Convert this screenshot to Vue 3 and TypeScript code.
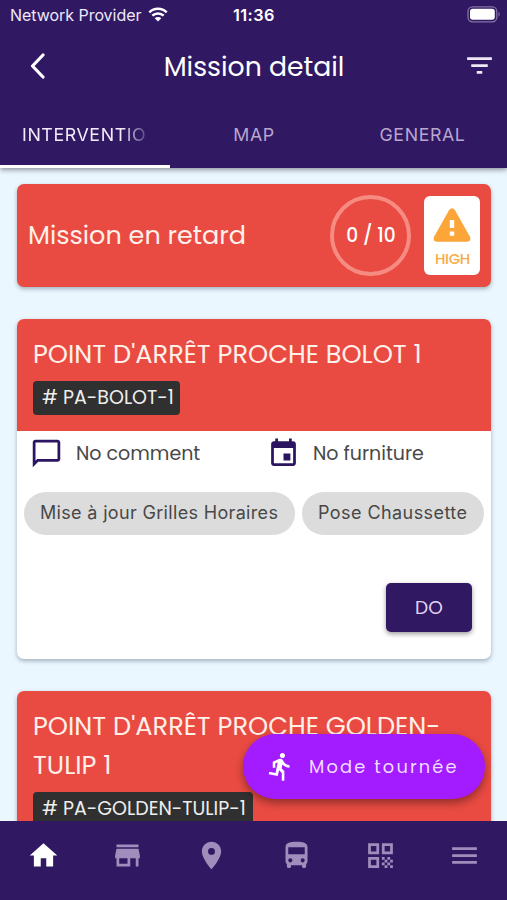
<script setup lang="ts">
interface NavItem {
  name: string
  path: string
  active?: boolean
}

interface Stop {
  lines: string[]
  code: string
}

const tabs: string[] = ['INTERVENTIO', 'MAP', 'GENERAL']

const firstStop: Stop = { lines: ["POINT D'ARRÊT PROCHE BOLOT 1"], code: 'PA-BOLOT-1' }
const secondStop: Stop = {
  lines: ["POINT D'ARRÊT PROCHE GOLDEN-", 'TULIP 1'],
  code: 'PA-GOLDEN-TULIP-1',
}

const navItems: NavItem[] = [
  { name: 'home', active: true, path: 'M10 20v-6h4v6h5v-8h3L12 3 2 12h3v8z' },
  { name: 'store', path: 'M20 4H4v2h16V4zm1 10v-2l-1-5H4l-1 5v2h1v6h10v-6h4v6h2v-6h1zm-9 4H6v-4h6v4z' },
  {
    name: 'place',
    path: 'M12 2C8.13 2 5 5.13 5 9c0 5.25 7 13 7 13s7-7.75 7-13c0-3.87-3.13-7-7-7zm0 9.5a2.5 2.5 0 0 1 0-5 2.5 2.5 0 0 1 0 5z',
  },
  {
    name: 'bus',
    path: 'M4 16c0 .88.39 1.67 1 2.22V20c0 .55.45 1 1 1h1c.55 0 1-.45 1-1v-1h8v1c0 .55.45 1 1 1h1c.55 0 1-.45 1-1v-1.78c.61-.55 1-1.34 1-2.22V6c0-3.5-3.58-4-8-4s-8 .5-8 4v10zm3.5 1c-.83 0-1.5-.67-1.5-1.5S6.67 14 7.5 14s1.5.67 1.5 1.5S8.33 17 7.5 17zm9 0c-.83 0-1.5-.67-1.5-1.5s.67-1.5 1.5-1.5 1.5.67 1.5 1.5-.67 1.5-1.5 1.5zm1.5-6H6V6h12v5z',
  },
  {
    name: 'qr',
    path: 'M3 11h8V3H3v8zm2-6h4v4H5V5zM3 21h8v-8H3v8zm2-6h4v4H5v-4zM13 3v8h8V3h-8zm6 6h-4V5h4v4zM19 19h2v2h-2zM13 13h2v2h-2zM15 15h2v2h-2zM13 17h2v2h-2zM15 19h2v2h-2zM17 17h2v2h-2zM17 13h2v2h-2zM19 15h2v2h-2z',
  },
  { name: 'menu', path: 'M3 18h18v-2H3v2zm0-5h18v-2H3v2zm0-7v2h18V6H3z' },
]
</script>

<template>
  <div class="screen">
    <header class="header">
      <div class="status">
        <div class="carrier">
          <span>Network Provider</span>
          <svg class="wifi" viewBox="0 0 20 15">
            <path d="M1.3 5.3a12.6 12.6 0 0 1 17.4 0M4.3 8.7a8.2 8.2 0 0 1 11.4 0" fill="none" stroke="#fff" stroke-width="2.5" />
            <path d="M10 14.6 6.7 11.3a4.7 4.7 0 0 1 6.6 0z" fill="#fff" />
          </svg>
        </div>
        <span class="clock">11:36</span>
        <svg class="battery" viewBox="0 0 34 17">
          <rect x="1" y=".8" width="28.8" height="15" rx="4.5" fill="none" stroke="#8373a6" stroke-width="1.3" />
          <rect x="3" y="2.8" width="24.8" height="11" rx="2.8" fill="#fff" />
          <path d="M31.5 5.8c1.6.7 1.6 4.3 0 5z" fill="#8373a6" />
        </svg>
      </div>
      <div class="toolbar">
        <svg class="back" viewBox="0 0 16 26">
          <path d="M13 2 2.500 13 13 24" fill="none" stroke="#fff" stroke-width="3.200" stroke-linecap="round" stroke-linejoin="round" />
        </svg>
        <h1 class="title">Mission detail</h1>
        <svg class="filter" viewBox="0 0 24 24">
          <path d="M10 18h4v-2h-4v2zM3 6v2h18V6H3zm3 7h12v-2H6v2z" fill="#efe9f7" />
        </svg>
      </div>
      <nav class="tabs">
        <div v-for="(tab, i) in tabs" :key="tab" class="tab" :class="{ current: i === 0 }">
          <span class="tab-label">{{ tab }}</span>
        </div>
      </nav>
    </header>

    <main class="content">
      <section class="summary">
        <span class="summary-title">Mission en retard</span>
        <div class="progress">0 / 10</div>
        <div class="priority">
          <svg class="warning" viewBox="0 0 38 34">
            <path d="M16 2.200q3-4 6 0L36.800 28.500q2 4.700-2.800 5.200H4Q-.8 33.200 1.200 28.500z" fill="#fca63a" />
            <path d="M16.800 12h4.400v8h-4.400zM16.800 23.500h4.400v4.300h-4.400z" fill="#fff" />
          </svg>
          <span class="priority-label">HIGH</span>
        </div>
      </section>

      <article class="card">
        <div class="card-head">
          <h2 class="stop-name">
            <span v-for="line in firstStop.lines" :key="line">{{ line }}</span>
          </h2>
          <div class="code code-first"># {{ firstStop.code }}</div>
        </div>
        <div class="facts">
          <div class="fact">
            <svg class="fact-icon" viewBox="0 0 24 24">
              <path d="M20 2H4c-1.1 0-2 .9-2 2v18l4-4h14c1.1 0 2-.9 2-2V4c0-1.1-.9-2-2-2zm0 14H5.2L4 17.2V4h16v12z" fill="#2c1560" />
            </svg>
            <span>No comment</span>
          </div>
          <div class="fact">
            <svg class="fact-icon" viewBox="0 0 24 24">
              <path d="M17 12h-5v5h5v-5zM16 1v2H8V1H6v2H5c-1.11 0-1.99.9-1.99 2L3 19c0 1.1.89 2 2 2h14c1.1 0 2-.9 2-2V5c0-1.1-.9-2-2-2h-1V1h-2zm3 18H5V8h14v11z" fill="#2c1560" />
            </svg>
            <span>No furniture</span>
          </div>
        </div>
        <div class="chips">
          <span class="chip chip-update">Mise à jour Grilles Horaires</span>
          <span class="chip chip-install">Pose Chaussette</span>
        </div>
        <div class="actions">
          <button class="do">DO</button>
        </div>
      </article>

      <article class="card">
        <div class="card-head">
          <h2 class="stop-name">
            <span v-for="line in secondStop.lines" :key="line">{{ line }}</span>
          </h2>
          <div class="code code-second"># {{ secondStop.code }}</div>
        </div>
      </article>

      <button class="fab">
        <svg class="runner" viewBox="0 0 24 24">
          <path d="M13.49 5.48c1.1 0 2-.9 2-2s-.9-2-2-2-2 .9-2 2 .9 2 2 2zm-3.6 13.9l1-4.4 2.1 2v6h2v-7.5l-2.1-2 .6-3c1.3 1.5 3.3 2.5 5.5 2.5v-2c-1.9 0-3.5-1-4.3-2.4l-1-1.6c-.4-.6-1-1-1.7-1-.3 0-.5.1-.8.1l-5.2 2.2v4.7h2v-3.4l1.8-.7-1.6 8.1-4.9-1-.4 2 7 1.4z" fill="#fff" />
        </svg>
        <span>Mode tournée</span>
      </button>
    </main>

    <nav class="bottom">
      <div v-for="item in navItems" :key="item.name" class="nav-item" :class="{ active: item.active }">
        <svg class="nav-icon" viewBox="0 0 24 24"><path :d="item.path" fill="currentColor" /></svg>
      </div>
    </nav>
  </div>
</template>

<style>
body {
  background: #ebf7ff;
}
</style>

<style scoped>
.screen {
  width: 507px;
  height: 900px;
  display: flex;
  flex-direction: column;
  overflow: hidden;
  background: #ebf7ff;
  color: #fff;
  font-family: Poppins, Inter, sans-serif;
  white-space: nowrap;
}

.screen *,
.screen {
  box-sizing: border-box;
}

svg {
  display: block;
  flex: none;
}

.header {
  flex: none;
  height: 168px;
  background: #301863;
  box-shadow: 0 2px 5px rgba(0, 0, 0, 0.4);
  z-index: 2;
}

.status {
  height: 30px;
  display: grid;
  grid-template-columns: 1fr auto 1fr;
  align-items: center;
  padding: 0 6px 0 10px;
  font-family: Inter, sans-serif;
}

.carrier {
  display: flex;
  align-items: center;
  gap: 7px;
  font-size: 16px;
  letter-spacing: -0.04px;
  color: #eee9f6;
}

.wifi {
  width: 20px;
  height: 15px;
  margin-top: -2px;
}

.clock {
  width: 45px;
  font-size: 16.3px;
  font-weight: 600;
  letter-spacing: 0.4px;
}

.battery {
  width: 34px;
  height: 17px;
  justify-self: end;
  margin-top: -2px;
}

.toolbar {
  height: 71px;
  display: grid;
  grid-template-columns: 60px 1fr 60px;
  align-items: center;
}

.back {
  width: 16px;
  height: 26px;
  margin-left: 30px;
}

.title {
  margin: 2px 0 0 1px;
  text-align: center;
  font-size: 26.7px;
  font-weight: 400;
}

.filter {
  width: 33px;
  height: 33px;
  margin-left: 16px;
}

.tabs {
  height: 67px;
  display: grid;
  grid-template-columns: 170px 168px 169px;
  font-family: Inter, sans-serif;
  font-size: 17.8px;
  color: #b7a7cf;
}

.tab {
  display: flex;
  align-items: center;
  justify-content: center;
  padding: 2px 22px 0;
  border-bottom: 3px solid transparent;
  letter-spacing: 0.6px;
}

.current {
  justify-content: flex-start;
  color: #f1ecf8;
  border-bottom-color: #fff;
}

.current .tab-label {
  mask-image: linear-gradient(to right, #000 100px, transparent 130px);
}

.content {
  position: relative;
  flex: 1;
  min-height: 0;
  overflow: hidden;
  padding: 16px 16px 0 17px;
  display: flex;
  flex-direction: column;
  gap: 32px;
}

.summary,
.card {
  flex: none;
  border-radius: 7px;
  box-shadow: 0 2px 4px rgba(40, 60, 80, 0.38);
}

.summary {
  height: 103px;
  display: flex;
  align-items: center;
  padding: 0 11px;
  background: #e94b42;
}

.summary-title {
  flex: 1;
  font-size: 25.5px;
  color: #fff0ea;
}

.progress {
  width: 81px;
  height: 81px;
  margin-right: 13px;
  padding-left: 1px;
  display: flex;
  align-items: center;
  justify-content: center;
  border: 4px solid #f68b82;
  border-radius: 50%;
  font-size: 18.6px;
  font-weight: 500;
}

.priority {
  width: 56px;
  height: 79px;
  display: flex;
  flex-direction: column;
  align-items: center;
  padding-top: 12px;
  border-radius: 6px;
  background: #fff;
}

.warning {
  width: 38px;
  height: 34px;
}

.priority-label {
  margin-top: 7px;
  padding-left: 1px;
  font-size: 14.8px;
  line-height: 20px;
  font-weight: 500;
  letter-spacing: -0.3px;
  color: #f9aa48;
}

.card {
  background: #fff;
  overflow: hidden;
  height: 340px;
}

.card-head {
  padding: 16px;
  background: #e94b42;
}

.stop-name {
  margin: 0;
  display: flex;
  flex-direction: column;
  font-size: 25.65px;
  line-height: 39px;
  font-weight: 400;
  color: #fff0ea;
}

.code {
  height: 34px;
  margin-top: 7px;
  padding: 0 0 0 9px;
  border-radius: 4px;
  background: #303030;
  color: #eee;
  font-size: 19px;
  line-height: 34px;
}

.code-first {
  width: 147px;
}

.code-second {
  width: 220px;
}

.facts {
  display: grid;
  grid-template-columns: 237px 1fr;
  height: 45px;
  padding-left: 13px;
  color: #484848;
}

.fact {
  display: flex;
  align-items: center;
  gap: 13px;
  font-size: 19px;
}

.fact-icon {
  width: 33px;
  height: 33px;
}

.chips {
  display: flex;
  gap: 7px;
  padding: 16px 7px 0;
}

.chip {
  height: 43px;
  border-radius: 22px;
  background: #dcdcdc;
  color: #484848;
  font-family: Inter, sans-serif;
  font-size: 18px;
  line-height: 42px;
  padding-left: 16px;
}

.chip-update {
  width: 271px;
  letter-spacing: 0.33px;
}

.chip-install {
  width: 182px;
  letter-spacing: 0.43px;
}

.actions {
  display: flex;
  justify-content: flex-end;
  padding: 48px 19px 0;
}

button {
  border: 0;
  padding: 0;
  font-family: inherit;
}

.do {
  width: 86px;
  height: 49px;
  padding-bottom: 1px;
  border-radius: 5px;
  background: #301863;
  box-shadow: 0 2px 5px rgba(0, 0, 0, 0.4);
  color: #e0d4f1;
  font-size: 18.6px;
}

.fab {
  position: absolute;
  right: 22px;
  bottom: 22px;
  width: 242px;
  height: 65px;
  display: flex;
  align-items: center;
  gap: 13px;
  padding-left: 22px;
  border-radius: 33px;
  background: #a31bff;
  box-shadow: 0 4px 8px rgba(0, 0, 0, 0.38);
  color: #f0dcff;
  font-size: 17.8px;
  letter-spacing: 2.15px;
}

.runner {
  width: 31px;
  height: 31px;
}

.bottom {
  flex: none;
  height: 79px;
  display: grid;
  grid-template-columns: repeat(6, 1fr);
  padding: 18px 0 0 1px;
  background: #301863;
  z-index: 2;
}

.nav-item {
  display: flex;
  justify-content: center;
  align-items: flex-start;
  color: #a18dbb;
}

.active {
  color: #fff;
}

.nav-icon {
  width: 33px;
  height: 33px;
}
</style>
